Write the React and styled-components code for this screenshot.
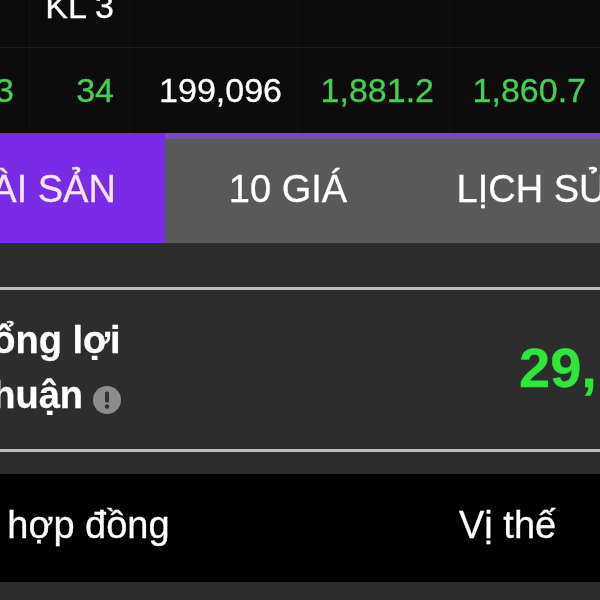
import React from 'react';
import styled, { createGlobalStyle } from 'styled-components';

const GlobalStyle = createGlobalStyle`
    html, body {
        margin: 0;
        padding: 0;
        background-color: #2d2d2d;
    }
`;

const Viewport = styled.div`
    width: 600px;
    height: 600px;
    overflow: hidden;
    background-color: #2d2d2d;
    font-family: "Liberation Sans", Arial, sans-serif;
    color: #ffffff;
    filter: blur(0.5px);
    -webkit-text-stroke: 0.3px currentColor;
`;

// the page is wider than the picture, it starts left of the window
const Page = styled.div`
    width: 900px;
    margin: -38px 0 0 -81px;
`;

const PriceTable = styled.div`
    background-color: #0c0c0c;
`;

const PriceRow = styled.div`
    display: grid;
    grid-template-columns: 111px 100px 168px 152px 152px;
    height: 85px;
    border-bottom: ${props => (props.$last ? "none" : "1px solid #1b1b1b")};
`;

const PriceCell = styled.div`
    display: flex;
    align-items: center;
    justify-content: flex-end;
    padding-right: 15px;
    padding-top: ${props => (props.$head ? "4px" : "0")};
    font-size: 34px;
    color: ${props => props.$color || "#ffffff"};
    border-right: 1px solid #131313;
`;

const TabBar = styled.div`
    display: flex;
    height: 104px;
    border-top: 6px solid #7a4ab4;
    background-color: #595959;
`;

const Tab = styled.div`
    display: flex;
    align-items: center;
    justify-content: center;
    flex: 0 0 246px;
    font-size: 38px;
    margin-top: ${props => (props.$active ? "-6px" : "0")};
    padding-top: ${props => (props.$active ? "2px" : "0")};
    padding-bottom: ${props => (props.$active ? "0" : "4px")};
    background-color: ${props => (props.$active ? "#7a2be6" : "transparent")};
    color: ${props => (props.$active ? "#f6e4ff" : "#ffffff")};
`;

const Summary = styled.div`
    display: flex;
    align-items: center;
    height: 159px;
    margin-top: 44px;
    border-top: 3px solid #bdbdbd;
    border-bottom: 3px solid #bdbdbd;
`;

const SummaryLabel = styled.div`
    flex: 0 0 550px;
    padding: 0 0 3px 50px;
    font-size: 38px;
    font-weight: bold;
    line-height: 55px;
`;

const SummaryValue = styled.div`
    padding-bottom: 5px;
    font-size: 56px;
    font-weight: bold;
    color: #2fe63a;
    white-space: nowrap;
`;

const InfoIcon = styled.svg`
    width: 30px;
    height: 30px;
    margin-left: 9px;
    vertical-align: -7px;
`;

const PositionHeader = styled.div`
    display: flex;
    align-items: center;
    height: 108px;
    margin-top: 22px;
    padding-bottom: 6px;
    box-sizing: border-box;
    background-color: #000000;
    font-size: 38px;
`;

const HeaderName = styled.div`
    flex: 0 0 515px;
    padding-left: 25px;
`;

const App = () => {
    return (
        <>
            <GlobalStyle />
            <Viewport>
                <Page>
                    <PriceTable>
                        <PriceRow>
                            <PriceCell />
                            <PriceCell $head>KL 3</PriceCell>
                            <PriceCell />
                            <PriceCell />
                            <PriceCell />
                        </PriceRow>
                        <PriceRow $last>
                            <PriceCell $color="#45d052">123</PriceCell>
                            <PriceCell $color="#45d052">34</PriceCell>
                            <PriceCell>199,096</PriceCell>
                            <PriceCell $color="#45d052">1,881.2</PriceCell>
                            <PriceCell $color="#45d052">1,860.7</PriceCell>
                        </PriceRow>
                    </PriceTable>

                    <TabBar>
                        <Tab $active>TÀI SẢN</Tab>
                        <Tab>10 GIÁ</Tab>
                        <Tab>LỊCH SỬ</Tab>
                    </TabBar>

                    <Summary>
                        <SummaryLabel>
                            Tổng lợi<br />
                            nhuận
                            <InfoIcon viewBox="0 0 30 30">
                                <circle cx="15" cy="15" r="14" fill="#8c8c8c" />
                                <rect x="13" y="6.5" width="4" height="11" rx="1.5" fill="#333333" />
                                <circle cx="15" cy="21.5" r="2.2" fill="#333333" />
                            </InfoIcon>
                        </SummaryLabel>
                        <SummaryValue>29,150,000</SummaryValue>
                    </Summary>

                    <PositionHeader>
                        <HeaderName>Mã hợp đồng</HeaderName>
                        <div>Vị thế</div>
                    </PositionHeader>
                </Page>
            </Viewport>
        </>
    );
};

export default App;
